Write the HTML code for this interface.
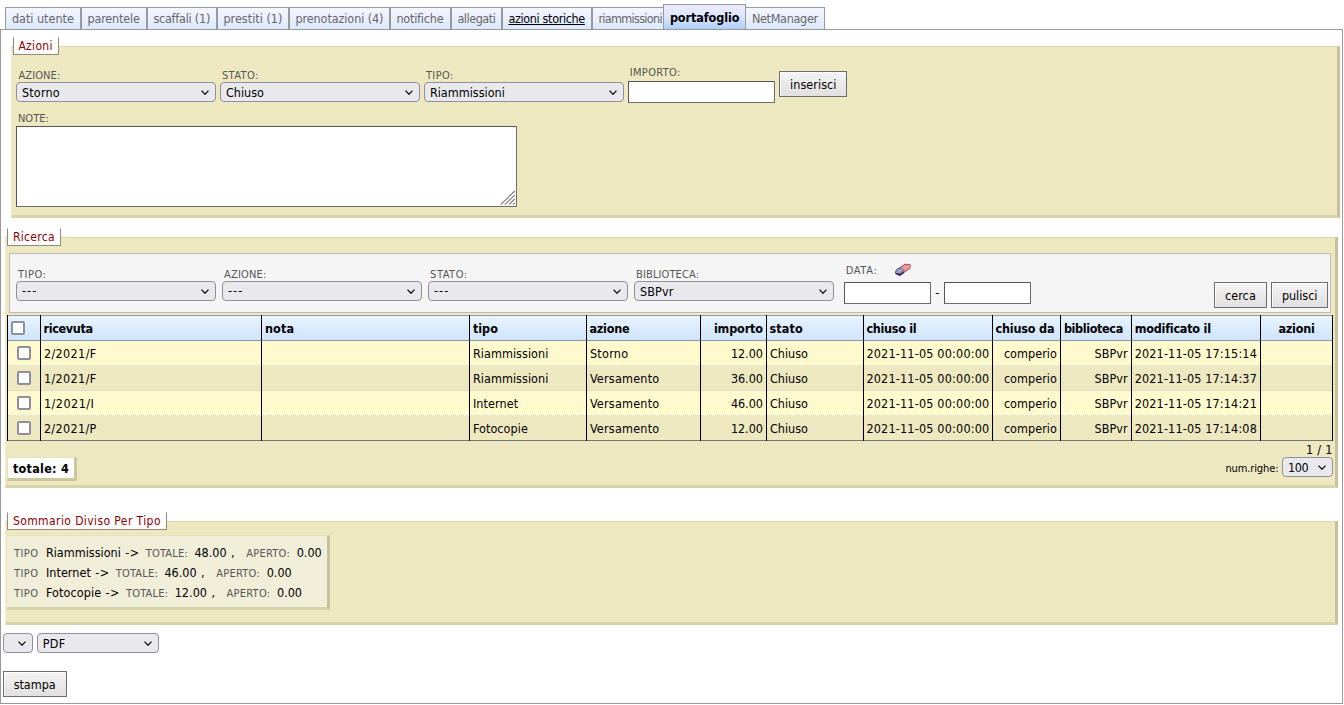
<!DOCTYPE html>
<html lang="it">
<head>
<meta charset="utf-8">
<title>portafoglio</title>
<style>
*{box-sizing:border-box;margin:0;padding:0}
html,body{width:1344px;height:705px;overflow:hidden;background:#fff}
body{position:relative;font-family:"DejaVu Sans Condensed","Liberation Sans",sans-serif;font-size:12.5px;color:#000;line-height:1}
.t{position:absolute;white-space:nowrap;line-height:16px;z-index:5}
.abs{position:absolute}
.tab{position:absolute;top:7px;height:23px;border:1px solid #999;border-bottom:none;background:linear-gradient(#f5f5ff,#dbe8fc)}
.tab.act{top:4px;height:26px;background:linear-gradient(#ecebff,#dfe6ff 45%,#a9cdfb)}
#panel{position:absolute;left:0;top:29px;width:1343px;height:675px;border:1px solid #999;background:#fff}
.fs{position:absolute;background:#eee8c0;border-top:1px solid #ddd6aa;border-left:1px solid #f2edc8;border-right:3px solid #c6c09c;border-bottom:3px solid #d8d3ac}
.lg{position:absolute;background:#fff;border:1px solid #8c8a78;border-top-color:#fff;height:18px}
.sel{position:absolute;height:20px;border:1px solid #8f8f9d;border-radius:4px;background:#e9e9ed}
.sel svg{position:absolute;right:6px;top:6.8px;width:8px;height:5.2px}
.inp{position:absolute;background:#fff;border:1px solid #6b6b6b;border-top-color:#555;border-left-color:#555}
.btn{position:absolute;height:26px;border:1px solid #6d6d6d;background:linear-gradient(#f4f4f4,#e1dfdf);box-shadow:inset 1px 1px 0 rgba(255,255,255,.75)}
.fbox{position:absolute;background:#f5f5f5;border:1px solid #bbb}
.cb{position:absolute;width:14px;height:14px;border:2px solid #8f8f9d;border-radius:2px;background:#fff}
.vl{position:absolute;width:1px;background:#000;top:315px;height:126px}
.row{position:absolute;left:8px;width:1324px;height:25px}
.tot{position:absolute;background:#fff;border-top:1px solid #e6e0b8;border-left:1px solid #e6e0b8;border-right:3px solid #cdc7a0;border-bottom:3px solid #cdc7a0}
.sum{position:absolute;background:#f0edd9;border-top:1px solid #e4dfc0;border-right:3px solid #c6c19e;border-bottom:3px solid #d7d2ac}
</style>
</head>
<body>
<div class="tab" style="left:5px;width:76px"></div>
<div class="tab" style="left:81px;width:66px"></div>
<div class="tab" style="left:147px;width:70px"></div>
<div class="tab" style="left:217px;width:72px"></div>
<div class="tab" style="left:289px;width:101px"></div>
<div class="tab" style="left:390px;width:61px"></div>
<div class="tab" style="left:451px;width:51px"></div>
<div class="tab" style="left:502px;width:90px"></div>
<div class="tab" style="left:592px;width:72px"></div>
<div class="tab act" style="left:663px;width:83px"></div>
<div class="tab" style="left:745px;width:80px"></div>
<div id="panel"></div>
<div class="fs" style="left:11px;top:46px;width:1329px;height:172px"></div>
<div class="lg" style="left:13px;top:37px;width:46px"></div>
<div class="sel" style="left:16px;top:82px;width:200px"><svg viewBox="0 0 8 5.2"><path d="M0.5 0.6 L4 4.3 L7.5 0.6" fill="none" stroke="#101010" stroke-width="1.25"/></svg></div>
<div class="sel" style="left:220px;top:82px;width:200px"><svg viewBox="0 0 8 5.2"><path d="M0.5 0.6 L4 4.3 L7.5 0.6" fill="none" stroke="#101010" stroke-width="1.25"/></svg></div>
<div class="sel" style="left:424px;top:82px;width:200px"><svg viewBox="0 0 8 5.2"><path d="M0.5 0.6 L4 4.3 L7.5 0.6" fill="none" stroke="#101010" stroke-width="1.25"/></svg></div>
<div class="inp" style="left:628px;top:81px;width:147px;height:22px"></div>
<div class="btn" style="left:779px;top:71px;width:68px"></div>
<div class="inp" style="left:16px;top:126px;width:501px;height:81px"><svg style="position:absolute;left:482.9px;top:62.7px" width="16" height="16" viewBox="0 0 16 16"><path d="M0.8 14.6 L14.8 1 M4.8 14.6 L14.8 5.2 M9 14.6 L14.8 9 M13 14.6 L14.8 13" stroke="#777" stroke-width="1.1" fill="none"/></svg></div>
<div class="fs" style="left:5px;top:237px;width:1333px;height:251px"></div>
<div class="lg" style="left:7px;top:228px;width:54px"></div>
<div class="fbox" style="left:9px;top:253px;width:1322px;height:60px"></div>
<div class="sel" style="left:16px;top:281px;width:200px"><svg viewBox="0 0 8 5.2"><path d="M0.5 0.6 L4 4.3 L7.5 0.6" fill="none" stroke="#101010" stroke-width="1.25"/></svg></div>
<div class="sel" style="left:222px;top:281px;width:200px"><svg viewBox="0 0 8 5.2"><path d="M0.5 0.6 L4 4.3 L7.5 0.6" fill="none" stroke="#101010" stroke-width="1.25"/></svg></div>
<div class="sel" style="left:428px;top:281px;width:200px"><svg viewBox="0 0 8 5.2"><path d="M0.5 0.6 L4 4.3 L7.5 0.6" fill="none" stroke="#101010" stroke-width="1.25"/></svg></div>
<div class="sel" style="left:634px;top:281px;width:200px"><svg viewBox="0 0 8 5.2"><path d="M0.5 0.6 L4 4.3 L7.5 0.6" fill="none" stroke="#101010" stroke-width="1.25"/></svg></div>
<svg class="abs" style="left:892px;top:261px" width="24" height="18" viewBox="0 0 24 18"><path d="M13.2 3.1 L18.3 3.6 Q19.2 4.2 19 5.6 L18.4 7.4 L12.1 12 L8.6 14.6 Q7.8 15 6.6 14.4 L3.5 12.7 Q3 12 3.2 11 L4.3 8.8 Q5.5 7.6 8 6.3 Z" fill="#b4515d"/><path d="M3.2 11 L3.5 12.7 L6.6 14.4 Q7.8 15 8.6 14.6 L12.1 12 L11.6 10.4 L8.4 12.4 L4.2 11.7 Z" fill="#2e2a58"/><path d="M8.3 6.1 Q5.5 7.4 4.1 8.7 L3.1 11 L4.3 11.9 L4.7 9.1 Q6 8 8.8 6.7 Z" fill="#5a5f82"/><path d="M13.2 3.4 L18.2 3.9 Q18.7 4.6 18.4 5.9 L12.6 9.7 L8.6 6.6 Z" fill="#e58c93"/><path d="M14 4.6 L17.6 4.6 L12.6 8 L10.4 6.9 Z" fill="#eda3a8"/><path d="M8.6 6.6 L12.6 9.7 L8.4 12.3 L4.2 11.6 L4.5 9 Q5.8 7.9 8.6 6.6 Z" fill="#7f89b1"/><path d="M5 9.6 L9.6 8.4 L10.8 9.6 L6 11.2 Z" fill="#aab2cf"/><path d="M4.4 11.2 L8.4 11.9 L8.3 12.5 L4.2 11.8 Z" fill="#d9deea"/><path d="M12.6 9.9 L18.4 6.1" stroke="#f6e4e6" stroke-width="0.7" stroke-dasharray="1.1 0.5" fill="none"/><path d="M8 6.3 L13.2 3.1 L18.3 3.6" stroke="#9a3744" stroke-width="0.6" fill="none"/></svg>
<div class="inp" style="left:844px;top:282px;width:87px;height:22px"></div>
<div class="inp" style="left:944px;top:282px;width:87px;height:22px"></div>
<div class="btn" style="left:1214px;top:282px;width:53px"></div>
<div class="btn" style="left:1271px;top:282px;width:57px"></div>
<div class="abs" style="left:7px;top:315px;width:1326px;height:26px;background:linear-gradient(#e8f3ff,#cfe4fc);border-top:1px solid #9c9c9c;border-bottom:1px solid #8c96a8"></div>
<div class="row" style="top:341px;background:#fffacd;border-bottom:1px dotted #d0d6d6;"></div>
<div class="cb" style="left:17px;top:346px"></div>
<div class="row" style="top:366px;background:#eee8c0;border-bottom:1px dotted #d0d6d6;"></div>
<div class="cb" style="left:17px;top:371px"></div>
<div class="row" style="top:391px;background:#fffacd;border-bottom:1px dotted #d0d6d6;"></div>
<div class="cb" style="left:17px;top:396px"></div>
<div class="row" style="top:416px;background:#eee8c0;border-bottom:1px solid #777;"></div>
<div class="cb" style="left:17px;top:421px"></div>
<div class="vl" style="left:7px"></div>
<div class="vl" style="left:40px"></div>
<div class="vl" style="left:261px"></div>
<div class="vl" style="left:469px"></div>
<div class="vl" style="left:586px"></div>
<div class="vl" style="left:700px"></div>
<div class="vl" style="left:766px"></div>
<div class="vl" style="left:863px"></div>
<div class="vl" style="left:992px"></div>
<div class="vl" style="left:1060px"></div>
<div class="vl" style="left:1131px"></div>
<div class="vl" style="left:1260px"></div>
<div class="vl" style="left:1332px"></div>
<div class="cb" style="left:11px;top:321px"></div>
<div class="sel" style="left:1282px;top:457px;width:51px"><svg viewBox="0 0 8 5.2"><path d="M0.5 0.6 L4 4.3 L7.5 0.6" fill="none" stroke="#101010" stroke-width="1.25"/></svg></div>
<div class="tot" style="left:7px;top:457px;width:70px;height:24px"></div>
<div class="fs" style="left:5px;top:521px;width:1333px;height:104px"></div>
<div class="lg" style="left:7px;top:512px;width:160px"></div>
<div class="sum" style="left:7px;top:535px;width:323px;height:75px"></div>
<div class="sel" style="left:3px;top:633px;width:30px"><svg viewBox="0 0 8 5.2"><path d="M0.5 0.6 L4 4.3 L7.5 0.6" fill="none" stroke="#101010" stroke-width="1.25"/></svg></div>
<div class="sel" style="left:37px;top:633px;width:122px"><svg viewBox="0 0 8 5.2"><path d="M0.5 0.6 L4 4.3 L7.5 0.6" fill="none" stroke="#101010" stroke-width="1.25"/></svg></div>
<div class="btn" style="left:3px;top:671px;width:64px"></div>
<span class="t" style="left:11.90px;top:10.60px;font-size:12.5px;color:#666;letter-spacing:-0.006px;">dati utente</span>
<span class="t" style="left:87.40px;top:10.60px;font-size:12.5px;color:#666;letter-spacing:-0.146px;">parentele</span>
<span class="t" style="left:153.40px;top:10.60px;font-size:12.5px;color:#666;letter-spacing:-0.236px;">scaffali (1)</span>
<span class="t" style="left:223.40px;top:10.60px;font-size:12.5px;color:#666;letter-spacing:0.013px;">prestiti (1)</span>
<span class="t" style="left:295.40px;top:10.60px;font-size:12.5px;color:#666;letter-spacing:-0.086px;">prenotazioni (4)</span>
<span class="t" style="left:396.40px;top:10.60px;font-size:12.5px;color:#666;letter-spacing:-0.207px;">notifiche</span>
<span class="t" style="left:457.40px;top:10.60px;font-size:12.5px;color:#666;letter-spacing:-0.455px;">allegati</span>
<span class="t" style="left:508.40px;top:10.60px;font-size:12.5px;color:#000;letter-spacing:-0.350px;text-decoration:underline">azioni storiche</span>
<span class="t" style="left:598.40px;top:10.60px;font-size:12.5px;color:#666;letter-spacing:-0.680px;">riammissioni</span>
<span class="t" style="left:669.90px;top:9.50px;font-size:12.5px;color:#000;font-weight:bold;letter-spacing:-0.081px;">portafoglio</span>
<span class="t" style="left:751.90px;top:10.60px;font-size:12.5px;color:#666;letter-spacing:-0.305px;">NetManager</span>
<span class="t" style="left:18.40px;top:37.75px;font-size:12px;color:#8b0000;letter-spacing:0.333px;">Azioni</span>
<span class="t" style="left:18.40px;top:68.00px;font-size:11px;color:#555;letter-spacing:0.107px;">AZIONE:</span>
<span class="t" style="left:221.90px;top:68.00px;font-size:11px;color:#555;letter-spacing:0.440px;">STATO:</span>
<span class="t" style="left:425.90px;top:68.00px;font-size:11px;color:#555;letter-spacing:0.428px;">TIPO:</span>
<span class="t" style="left:629.70px;top:65.00px;font-size:11px;color:#555;letter-spacing:0.342px;">IMPORTO:</span>
<span class="t" style="left:17.90px;top:111.00px;font-size:11px;color:#555;letter-spacing:0.034px;">NOTE:</span>
<span class="t" style="left:21.90px;top:84.50px;font-size:12.5px;color:#000;letter-spacing:0.193px;">Storno</span>
<span class="t" style="left:225.90px;top:84.50px;font-size:12.5px;color:#000;letter-spacing:0.003px;">Chiuso</span>
<span class="t" style="left:429.90px;top:84.50px;font-size:12.5px;color:#000;letter-spacing:0.013px;">Riammissioni</span>
<span class="t" style="left:790.00px;top:76.75px;font-size:12.5px;color:#000;letter-spacing:0.061px;">inserisci</span>
<span class="t" style="left:12.90px;top:229.00px;font-size:12px;color:#8b0000;letter-spacing:0.312px;">Ricerca</span>
<span class="t" style="left:17.90px;top:266.75px;font-size:11px;color:#555;letter-spacing:0.528px;">TIPO:</span>
<span class="t" style="left:224.10px;top:266.75px;font-size:11px;color:#555;letter-spacing:0.150px;">AZIONE:</span>
<span class="t" style="left:430.10px;top:266.75px;font-size:11px;color:#555;letter-spacing:0.540px;">STATO:</span>
<span class="t" style="left:636.10px;top:266.75px;font-size:11px;color:#555;letter-spacing:0.107px;">BIBLIOTECA:</span>
<span class="t" style="left:845.70px;top:262.70px;font-size:11px;color:#555;letter-spacing:0.649px;">DATA:</span>
<span class="t" style="left:21.90px;top:282.70px;font-size:12.5px;color:#000;letter-spacing:1.104px;">---</span>
<span class="t" style="left:227.90px;top:282.70px;font-size:12.5px;color:#000;letter-spacing:1.104px;">---</span>
<span class="t" style="left:433.90px;top:282.70px;font-size:12.5px;color:#000;letter-spacing:1.104px;">---</span>
<span class="t" style="left:639.90px;top:283.50px;font-size:12.5px;color:#000;letter-spacing:0.136px;">SBPvr</span>
<span class="t" style="left:935.20px;top:284.50px;font-size:12.5px;color:#000;letter-spacing:1.237px;">-</span>
<span class="t" style="left:1224.90px;top:287.75px;font-size:12.5px;color:#000;letter-spacing:0.094px;">cerca</span>
<span class="t" style="left:1281.90px;top:287.75px;font-size:12.5px;color:#000;letter-spacing:-0.027px;">pulisci</span>
<span class="t" style="left:43.40px;top:320.75px;font-size:12.5px;color:#000;font-weight:bold;letter-spacing:-0.312px;">ricevuta</span>
<span class="t" style="left:264.90px;top:320.75px;font-size:12.5px;color:#000;font-weight:bold;letter-spacing:0.199px;">nota</span>
<span class="t" style="left:472.90px;top:320.75px;font-size:12.5px;color:#000;font-weight:bold;letter-spacing:-0.004px;">tipo</span>
<span class="t" style="left:589.40px;top:320.75px;font-size:12.5px;color:#000;font-weight:bold;letter-spacing:-0.227px;">azione</span>
<span class="t" style="left:713.90px;top:320.75px;font-size:12.5px;color:#000;font-weight:bold;letter-spacing:-0.143px;">importo</span>
<span class="t" style="left:769.40px;top:320.75px;font-size:12.5px;color:#000;font-weight:bold;letter-spacing:0.147px;">stato</span>
<span class="t" style="left:866.40px;top:320.75px;font-size:12.5px;color:#000;font-weight:bold;letter-spacing:-0.286px;">chiuso il</span>
<span class="t" style="left:995.40px;top:320.75px;font-size:12.5px;color:#000;font-weight:bold;letter-spacing:-0.168px;">chiuso da</span>
<span class="t" style="left:1063.90px;top:320.75px;font-size:12.5px;color:#000;font-weight:bold;letter-spacing:-0.364px;">biblioteca</span>
<span class="t" style="left:1134.70px;top:320.75px;font-size:12.5px;color:#000;font-weight:bold;letter-spacing:-0.227px;">modificato il</span>
<span class="t" style="left:1278.40px;top:320.75px;font-size:12.5px;color:#000;font-weight:bold;letter-spacing:-0.213px;">azioni</span>
<span class="t" style="left:43.90px;top:345.75px;font-size:12.5px;color:#000;letter-spacing:0.365px;">2/2021/F</span>
<span class="t" style="left:472.90px;top:345.75px;font-size:12.5px;color:#000;letter-spacing:0.055px;">Riammissioni</span>
<span class="t" style="left:589.90px;top:345.75px;font-size:12.5px;color:#000;letter-spacing:0.276px;">Storno</span>
<span class="t" style="left:730.90px;top:345.75px;font-size:12.5px;color:#000;letter-spacing:-0.037px;">12.00</span>
<span class="t" style="left:769.90px;top:345.75px;font-size:12.5px;color:#000;letter-spacing:0.003px;">Chiuso</span>
<span class="t" style="left:866.40px;top:345.75px;font-size:12.5px;color:#000;letter-spacing:0.188px;">2021-11-05 00:00:00</span>
<span class="t" style="left:1003.90px;top:345.75px;font-size:12.5px;color:#000;letter-spacing:0.035px;">comperio</span>
<span class="t" style="left:1094.40px;top:345.75px;font-size:12.5px;color:#000;letter-spacing:0.096px;">SBPvr</span>
<span class="t" style="left:1134.70px;top:345.75px;font-size:12.5px;color:#000;letter-spacing:0.151px;">2021-11-05 17:15:14</span>
<span class="t" style="left:43.90px;top:370.75px;font-size:12.5px;color:#000;letter-spacing:0.365px;">1/2021/F</span>
<span class="t" style="left:472.90px;top:370.75px;font-size:12.5px;color:#000;letter-spacing:0.055px;">Riammissioni</span>
<span class="t" style="left:589.90px;top:370.75px;font-size:12.5px;color:#000;letter-spacing:0.219px;">Versamento</span>
<span class="t" style="left:730.90px;top:370.75px;font-size:12.5px;color:#000;letter-spacing:-0.037px;">36.00</span>
<span class="t" style="left:769.90px;top:370.75px;font-size:12.5px;color:#000;letter-spacing:0.003px;">Chiuso</span>
<span class="t" style="left:866.40px;top:370.75px;font-size:12.5px;color:#000;letter-spacing:0.188px;">2021-11-05 00:00:00</span>
<span class="t" style="left:1003.90px;top:370.75px;font-size:12.5px;color:#000;letter-spacing:0.035px;">comperio</span>
<span class="t" style="left:1094.40px;top:370.75px;font-size:12.5px;color:#000;letter-spacing:0.096px;">SBPvr</span>
<span class="t" style="left:1134.70px;top:370.75px;font-size:12.5px;color:#000;letter-spacing:0.151px;">2021-11-05 17:14:37</span>
<span class="t" style="left:43.90px;top:395.75px;font-size:12.5px;color:#000;letter-spacing:0.479px;">1/2021/I</span>
<span class="t" style="left:472.90px;top:395.75px;font-size:12.5px;color:#000;letter-spacing:0.107px;">Internet</span>
<span class="t" style="left:589.90px;top:395.75px;font-size:12.5px;color:#000;letter-spacing:0.219px;">Versamento</span>
<span class="t" style="left:730.90px;top:395.75px;font-size:12.5px;color:#000;letter-spacing:-0.037px;">46.00</span>
<span class="t" style="left:769.90px;top:395.75px;font-size:12.5px;color:#000;letter-spacing:0.003px;">Chiuso</span>
<span class="t" style="left:866.40px;top:395.75px;font-size:12.5px;color:#000;letter-spacing:0.188px;">2021-11-05 00:00:00</span>
<span class="t" style="left:1003.90px;top:395.75px;font-size:12.5px;color:#000;letter-spacing:0.035px;">comperio</span>
<span class="t" style="left:1094.40px;top:395.75px;font-size:12.5px;color:#000;letter-spacing:0.096px;">SBPvr</span>
<span class="t" style="left:1134.70px;top:395.75px;font-size:12.5px;color:#000;letter-spacing:0.151px;">2021-11-05 17:14:21</span>
<span class="t" style="left:43.90px;top:420.75px;font-size:12.5px;color:#000;letter-spacing:0.326px;">2/2021/P</span>
<span class="t" style="left:472.90px;top:420.75px;font-size:12.5px;color:#000;letter-spacing:0.062px;">Fotocopie</span>
<span class="t" style="left:589.90px;top:420.75px;font-size:12.5px;color:#000;letter-spacing:0.219px;">Versamento</span>
<span class="t" style="left:730.90px;top:420.75px;font-size:12.5px;color:#000;letter-spacing:-0.037px;">12.00</span>
<span class="t" style="left:769.90px;top:420.75px;font-size:12.5px;color:#000;letter-spacing:0.003px;">Chiuso</span>
<span class="t" style="left:866.40px;top:420.75px;font-size:12.5px;color:#000;letter-spacing:0.188px;">2021-11-05 00:00:00</span>
<span class="t" style="left:1003.90px;top:420.75px;font-size:12.5px;color:#000;letter-spacing:0.035px;">comperio</span>
<span class="t" style="left:1094.40px;top:420.75px;font-size:12.5px;color:#000;letter-spacing:0.096px;">SBPvr</span>
<span class="t" style="left:1134.70px;top:420.75px;font-size:12.5px;color:#000;letter-spacing:0.151px;">2021-11-05 17:14:08</span>
<span class="t" style="left:1305.90px;top:442.00px;font-size:12.5px;color:#000;letter-spacing:0.300px;">1 / 1</span>
<span class="t" style="left:1225.40px;top:460.75px;font-size:11px;color:#000;letter-spacing:-0.114px;">num.righe:</span>
<span class="t" style="left:1287.90px;top:459.50px;font-size:12.5px;color:#000;letter-spacing:-0.323px;">100</span>
<span class="t" style="left:12.90px;top:460.75px;font-size:12.5px;color:#000;font-weight:bold;letter-spacing:0.273px;">totale: 4</span>
<span class="t" style="left:12.90px;top:512.75px;font-size:12px;color:#8b0000;letter-spacing:0.408px;">Sommario Diviso Per Tipo</span>
<span class="t" style="left:13.90px;top:545.75px;font-size:11px;color:#555;letter-spacing:0.445px;">TIPO</span>
<span class="t" style="left:45.90px;top:544.75px;font-size:12.5px;color:#000;letter-spacing:0.013px;">Riammissioni</span>
<span class="t" style="left:125.30px;top:544.75px;font-size:12.5px;color:#000;letter-spacing:0.383px;">-&gt;</span>
<span class="t" style="left:145.70px;top:545.75px;font-size:11px;color:#555;letter-spacing:0.201px;">TOTALE:</span>
<span class="t" style="left:194.40px;top:544.75px;font-size:12.5px;color:#000;letter-spacing:0.022px;">48.00</span>
<span class="t" style="left:231.10px;top:544.75px;font-size:12.5px;color:#000;letter-spacing:0.422px;">,</span>
<span class="t" style="left:246.30px;top:545.75px;font-size:11px;color:#555;letter-spacing:0.236px;">APERTO:</span>
<span class="t" style="left:296.70px;top:544.75px;font-size:12.5px;color:#000;letter-spacing:-0.008px;">0.00</span>
<span class="t" style="left:13.90px;top:565.75px;font-size:11px;color:#555;letter-spacing:0.445px;">TIPO</span>
<span class="t" style="left:45.90px;top:564.75px;font-size:12.5px;color:#000;letter-spacing:0.045px;">Internet</span>
<span class="t" style="left:95.30px;top:564.75px;font-size:12.5px;color:#000;letter-spacing:0.383px;">-&gt;</span>
<span class="t" style="left:115.70px;top:565.75px;font-size:11px;color:#555;letter-spacing:0.201px;">TOTALE:</span>
<span class="t" style="left:164.40px;top:564.75px;font-size:12.5px;color:#000;letter-spacing:0.022px;">46.00</span>
<span class="t" style="left:201.10px;top:564.75px;font-size:12.5px;color:#000;letter-spacing:0.422px;">,</span>
<span class="t" style="left:216.30px;top:565.75px;font-size:11px;color:#555;letter-spacing:0.236px;">APERTO:</span>
<span class="t" style="left:266.70px;top:564.75px;font-size:12.5px;color:#000;letter-spacing:-0.008px;">0.00</span>
<span class="t" style="left:13.90px;top:585.75px;font-size:11px;color:#555;letter-spacing:0.445px;">TIPO</span>
<span class="t" style="left:45.90px;top:584.75px;font-size:12.5px;color:#000;letter-spacing:0.096px;">Fotocopie</span>
<span class="t" style="left:105.60px;top:584.75px;font-size:12.5px;color:#000;letter-spacing:0.383px;">-&gt;</span>
<span class="t" style="left:126.00px;top:585.75px;font-size:11px;color:#555;letter-spacing:0.201px;">TOTALE:</span>
<span class="t" style="left:174.70px;top:584.75px;font-size:12.5px;color:#000;letter-spacing:0.022px;">12.00</span>
<span class="t" style="left:211.40px;top:584.75px;font-size:12.5px;color:#000;letter-spacing:0.422px;">,</span>
<span class="t" style="left:226.60px;top:585.75px;font-size:11px;color:#555;letter-spacing:0.236px;">APERTO:</span>
<span class="t" style="left:277.00px;top:584.75px;font-size:12.5px;color:#000;letter-spacing:-0.008px;">0.00</span>
<span class="t" style="left:42.65px;top:635.50px;font-size:12.5px;color:#000;letter-spacing:0.276px;">PDF</span>
<span class="t" style="left:13.65px;top:676.75px;font-size:12.5px;color:#000;letter-spacing:-0.026px;">stampa</span>
</body>
</html>
